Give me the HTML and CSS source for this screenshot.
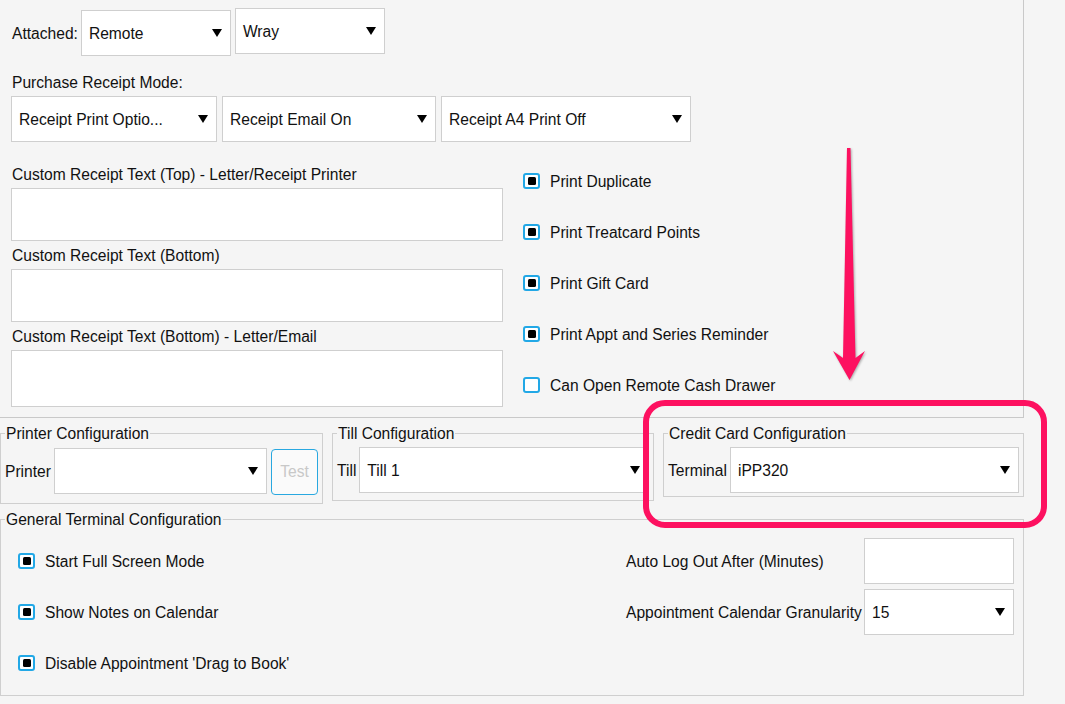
FILE: index.html
```html
<!DOCTYPE html>
<html>
<head>
<meta charset="utf-8">
<link rel="stylesheet" href="styles.css">
</head>
<body>
<div class="page">
  <section class="upper">
    <div class="row-attached">
      <span class="lbl attached-lbl">Attached:</span>
      <div class="select w150 remote"><span>Remote</span><svg class="caret" viewBox="0 0 10 8"><polygon points="0,0 10,0 5,8"/></svg></div>
      <div class="select w150"><span>Wray</span><svg class="caret" viewBox="0 0 10 8"><polygon points="0,0 10,0 5,8"/></svg></div>
    </div>
    <div class="lbl mode-lbl">Purchase Receipt Mode:</div>
    <div class="row-mode">
      <div class="select w206"><span>Receipt Print Optio...</span><svg class="caret" viewBox="0 0 10 8"><polygon points="0,0 10,0 5,8"/></svg></div>
      <div class="select w214"><span>Receipt Email On</span><svg class="caret" viewBox="0 0 10 8"><polygon points="0,0 10,0 5,8"/></svg></div>
      <div class="select w250"><span>Receipt A4 Print Off</span><svg class="caret" viewBox="0 0 10 8"><polygon points="0,0 10,0 5,8"/></svg></div>
    </div>
    <div class="middle">
      <div class="texts">
        <div class="lbl ta-lbl">Custom Receipt Text (Top) - Letter/Receipt Printer</div>
        <textarea class="ta"></textarea>
        <div class="lbl ta-lbl">Custom Receipt Text (Bottom)</div>
        <textarea class="ta"></textarea>
        <div class="lbl ta-lbl">Custom Receipt Text (Bottom) - Letter/Email</div>
        <textarea class="ta ta-tall"></textarea>
      </div>
      <div class="checks">
        <div class="check"><span class="cb"><span class="cb-dot"></span></span><span class="cl">Print Duplicate</span></div>
        <div class="check"><span class="cb"><span class="cb-dot"></span></span><span class="cl">Print Treatcard Points</span></div>
        <div class="check"><span class="cb"><span class="cb-dot"></span></span><span class="cl">Print Gift Card</span></div>
        <div class="check"><span class="cb"><span class="cb-dot"></span></span><span class="cl">Print Appt and Series Reminder</span></div>
        <div class="check"><span class="cb"></span><span class="cl">Can Open Remote Cash Drawer</span></div>
      </div>
    </div>
  </section>

  <div class="config-row">
    <fieldset class="fs fs-printer">
      <legend>Printer Configuration</legend>
      <div class="fs-line">
        <span class="lbl">Printer</span>
        <div class="select grow"><span></span><svg class="caret" viewBox="0 0 10 8"><polygon points="0,0 10,0 5,8"/></svg></div>
        <div class="btn-test">Test</div>
      </div>
    </fieldset>
    <fieldset class="fs fs-till">
      <legend>Till Configuration</legend>
      <div class="fs-line">
        <span class="lbl">Till</span>
        <div class="select grow"><span>Till 1</span><svg class="caret" viewBox="0 0 10 8"><polygon points="0,0 10,0 5,8"/></svg></div>
      </div>
    </fieldset>
    <fieldset class="fs fs-credit">
      <legend>Credit Card Configuration</legend>
      <div class="fs-line">
        <span class="lbl">Terminal</span>
        <div class="select grow"><span>iPP320</span><svg class="caret" viewBox="0 0 10 8"><polygon points="0,0 10,0 5,8"/></svg></div>
      </div>
    </fieldset>
  </div>

  <fieldset class="fs fs-general">
    <legend>General Terminal Configuration</legend>
    <div class="general">
      <div class="gen-checks">
        <div class="gcheck"><span class="cb"><span class="cb-dot"></span></span><span class="cl">Start Full Screen Mode</span></div>
        <div class="gcheck"><span class="cb"><span class="cb-dot"></span></span><span class="cl">Show Notes on Calendar</span></div>
        <div class="gcheck"><span class="cb"><span class="cb-dot"></span></span><span class="cl">Disable Appointment 'Drag to Book'</span></div>
      </div>
      <div class="gen-grid">
        <span class="lbl">Auto Log Out After (Minutes)</span>
        <div class="input-box"></div>
        <span class="lbl">Appointment Calendar Granularity</span>
        <div class="select"><span>15</span><svg class="caret" viewBox="0 0 10 8"><polygon points="0,0 10,0 5,8"/></svg></div>
      </div>
    </div>
  </fieldset>
</div>

<div class="highlight"></div>
<svg class="arrow" viewBox="820 140 60 250" width="60" height="250">
  <polygon points="847,148 850.5,148 855.5,358 865,351 849.5,380 833,351 843,358"/>
</svg>
</body>
</html>
```

FILE: styles.css
```css
html, body {
  margin: 0;
  padding: 0;
  background: #f5f5f5;
}
body {
  font-family: "Liberation Sans", Arial, sans-serif;
  font-size: 15.6px;
  color: #111;
  width: 1065px;
  height: 704px;
  overflow: hidden;
  position: relative;
}
.page {
  width: 1024px;
}
.lbl {
  line-height: 18px;
  white-space: nowrap;
}

/* upper section */
.upper {
  box-sizing: border-box;
  height: 418px;
  border-right: 1px solid #c9c9c9;
  border-bottom: 1px solid #c9c9c9;
  padding: 8px 0 0 11px;
}
.row-attached {
  display: flex;
  align-items: flex-start;
  gap: 4px;
}
.attached-lbl {
  line-height: 45px;
  padding-top: 1px;
  margin-top: 2px;
  margin-left: 1px;
  margin-right: -1px;
}
.remote {
  margin-top: 2px;
}
.mode-lbl {
  margin-top: 18px;
  margin-left: 1px;
}
.row-mode {
  display: flex;
  gap: 5px;
  margin-top: 4px;
}

.select {
  box-sizing: border-box;
  height: 46px;
  background: #fff;
  border: 1px solid #cfcfcf;
  display: flex;
  align-items: center;
  justify-content: space-between;
  padding: 1px 8px 0 7px;
  white-space: nowrap;
}
.caret {
  width: 10px;
  height: 8px;
  flex: none;
  fill: #000;
  margin-top: -1px;
}
.w150 { width: 150px; }
.w206 { width: 206px; }
.w214 { width: 214px; }
.w250 { width: 250px; }
.grow { flex: 1; min-width: 0; }

.middle {
  display: flex;
  margin-top: 24px;
}
.texts {
  width: 492px;
  display: flex;
  flex-direction: column;
}
.ta-lbl {
  margin-left: 1px;
  margin-bottom: 4px;
}
.ta {
  display: block;
  box-sizing: border-box;
  width: 492px;
  height: 53px;
  margin: 0 0 6px 0;
  padding: 0;
  border: 1px solid #cfcfcf;
  background: #fff;
  resize: none;
  outline: none;
}
.ta-tall {
  height: 57px;
  margin-bottom: 0;
}
.checks {
  margin-left: 20px;
  display: flex;
  flex-direction: column;
  gap: 21px;
}
.check, .gcheck {
  height: 30px;
  display: flex;
  align-items: center;
  gap: 10px;
  white-space: nowrap;
}
.cl {
  padding-top: 1px;
}
.cb {
  box-sizing: border-box;
  width: 17px;
  height: 16px;
  border: 2px solid #22a8e6;
  border-radius: 3px;
  background: #fff;
  display: flex;
  align-items: center;
  justify-content: center;
  flex: none;
}
.cb-dot {
  width: 8px;
  height: 8px;
  background: #000;
  border-radius: 1.5px;
}

/* config row */
.config-row {
  display: flex;
  align-items: flex-start;
  gap: 9px;
  margin-top: 6px;
}
.fs {
  margin: 0;
  min-width: 0;
  box-sizing: border-box;
  border: 1px solid #cfcfcf;
  padding: 4px 4px 8px 4px;
}
.fs legend {
  padding: 0 1px;
  line-height: 19px;
  white-space: nowrap;
}
.fs-printer { width: 323px; }
.fs-till { width: 322px; padding-bottom: 7px; }
.fs-credit { width: 361px; padding-bottom: 3px; }
.fs-line {
  display: flex;
  align-items: center;
  gap: 3px;
}
.fs-line > .lbl {
  padding-top: 1px;
}
.btn-test {
  box-sizing: border-box;
  width: 47px;
  height: 46px;
  margin-left: 1px;
  margin-top: 2px;
  border: 1px solid #29a8e0;
  border-radius: 4px;
  background: #fafafa;
  color: #c8c8c8;
  display: flex;
  align-items: center;
  justify-content: center;
}

/* general */
.fs-general {
  width: 1024px;
  margin-top: 6px;
  padding: 9px 4px 9px 4px;
}
.general {
  display: flex;
  align-items: flex-start;
}
.gen-checks {
  margin-left: 13px;
  display: flex;
  flex-direction: column;
  gap: 5px;
}
.gcheck {
  height: 46px;
}
.gen-grid {
  margin-left: auto;
  margin-right: 5px;
  display: grid;
  grid-template-columns: 238px 150px;
  grid-auto-rows: 46px;
  row-gap: 5px;
  align-items: center;
}
.gen-grid > .lbl {
  padding-top: 1px;
}
.input-box {
  box-sizing: border-box;
  height: 46px;
  background: #fff;
  border: 1px solid #cfcfcf;
}

/* annotations */
.highlight {
  position: absolute;
  left: 643px;
  top: 400px;
  width: 404px;
  height: 128px;
  box-sizing: border-box;
  border: 6px solid #fd1160;
  border-radius: 22px;
}
.arrow {
  position: absolute;
  left: 820px;
  top: 140px;
  fill: #fd1160;
  filter: drop-shadow(1px 1px 1px rgba(0, 0, 0, 0.3));
}
```
